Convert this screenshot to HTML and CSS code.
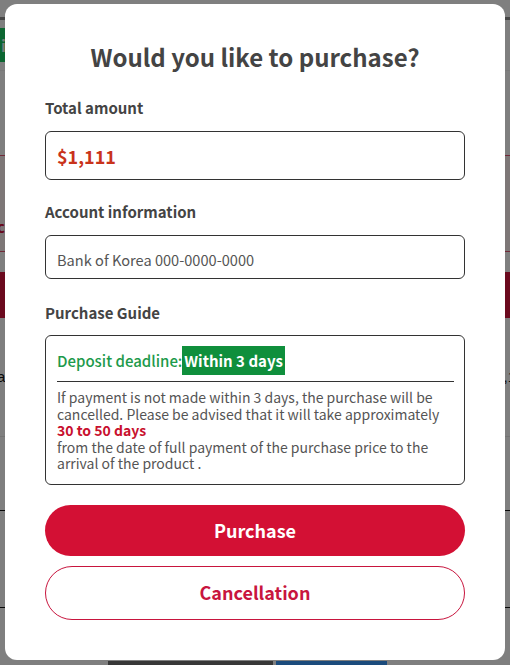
FILE: index.html
```html
<!DOCTYPE html>
<html lang="en">
<head>
  <meta charset="UTF-8" />
  <meta name="viewport" content="width=device-width, initial-scale=1.0"/>
  <title>Purchase</title>
  <link rel="stylesheet" href="styles.css">
</head>
<body>

  <!-- page behind the dialog -->
  <div class="page">
    <div class="topbar"></div>
    <div class="tabs">
      <span class="tab-active">i</span>
    </div>
    <div class="summary">
      <p class="summary-text">c</p>
    </div>
    <div class="bid-bar">Place a bid</div>
    <div class="info-row">
      <span>a</span>
      <span>,1</span>
    </div>
    <div class="rule light"></div>
    <div class="rule dark"></div>
    <div class="rule dark"></div>
    <div class="page-actions">
      <span class="btn-gray"></span>
      <span class="btn-blue"></span>
    </div>
  </div>

  <div class="overlay">
    <div class="modal">
      <h1>Would you like to purchase?</h1>

      <form class="details" onsubmit="return false">
        <label for="total">Total amount</label>
        <input type="text" id="total" class="amount" value="$1,111" readonly>

        <label for="account">Account information</label>
        <input type="text" id="account" class="account" value="Bank of Korea 000-0000-0000" readonly>

        <label>Purchase Guide</label>
        <div class="guide">
          <div class="deadline">
            <span class="deadline-label">Deposit deadline:</span><span class="deadline-value">Within 3 days</span>
          </div>
          <p class="guide-text">
            If payment is not made within 3 days, the purchase will be cancelled. Please be advised that it will take approximately
            <strong>30 to 50 days</strong>
            from the date of full payment of the purchase price to the arrival of the product .
          </p>
        </div>

        <button type="submit" class="btn-purchase">Purchase</button>
        <button type="button" class="btn-cancel">Cancellation</button>
      </form>
    </div>
  </div>

</body>
</html>
```

FILE: styles.css
```css
body {
  margin: 0;
  font-family: "Noto Sans CJK KR", "Noto Sans", sans-serif;
  background: #fff;
  height: 665px;
  overflow: hidden;
}
.page {
  width: 510px;
}
.topbar {
  height: 17px;
  border-bottom: 3px solid #8e8e8e;
}
.tabs {
  padding-top: 8px;
  height: 42px;
  border-bottom: 1px solid #f2f2f2;
}
.tab-active {
  display: inline-block;
  width: 120px;
  height: 34px;
  line-height: 34px;
  background: #19cc62;
  color: #e8f8ee;
  font-weight: bold;
  padding-left: 1px;
  box-sizing: border-box;
}
.summary {
  margin-top: 84px;
  height: 95px;
  border-top: 1px solid #e25470;
  border-bottom: 1px solid #e25470;
  background: #fbeeee;
}
.summary-text {
  margin: 0 0 0 -3px;
  padding-top: 60px;
  color: #d0103a;
  font-weight: bold;
  font-size: 15px;
}
.bid-bar {
  margin-top: 20px;
  height: 46px;
  line-height: 46px;
  background: #d6143c;
  color: #fff;
  text-align: center;
  font-weight: bold;
}
.info-row {
  display: flex;
  justify-content: space-between;
  padding: 50px 0 0;
  height: 68px;
  font-family: "Liberation Sans", Arial, sans-serif;
  font-size: 15px;
  color: #111;
  margin-left: -3px;
  margin-right: -6px;
}
.rule {
  height: 1px;
}
.rule.light {
  background: #e6e6e6;
}
.rule.dark {
  background: #111;
}
.rule.light + .rule.dark {
  margin-top: 73px;
}
.rule.dark + .rule.dark {
  margin-top: 96px;
}
.page-actions {
  display: flex;
  gap: 3px;
  margin-top: 53px;
  padding-left: 108px;
}
.btn-gray {
  width: 165px;
  height: 30px;
  background: #6e6e6e;
}
.btn-blue {
  width: 111px;
  height: 30px;
  background: #3696f8;
}

.overlay {
  position: fixed;
  inset: 0;
  background: rgba(0, 0, 0, 0.5);
}
.modal {
  position: absolute;
  left: 5px;
  top: 4px;
  width: 500px;
  height: 656px;
  box-sizing: border-box;
  background: #fff;
  border-radius: 12px;
  padding: 37px 40px 0;
}
h1 {
  margin: 0 0 25px;
  font-size: 24px;
  line-height: 32px;
  text-align: center;
  color: #444;
  font-weight: bold;
}
.details label {
  display: block;
  font-size: 15px;
  line-height: 20px;
  font-weight: bold;
  color: #444;
  margin: 0 0 13px;
}
.details input {
  display: block;
  width: 100%;
  box-sizing: border-box;
  border: 1px solid #333;
  border-radius: 6px;
  padding: 0 11px;
  font-family: inherit;
  outline: none;
  background: #fff;
  margin-bottom: 22px;
}
.amount {
  height: 49px;
  font-size: 18px;
  font-weight: bold;
  color: #c9331b;
}
.details .account {
  height: 44px;
  padding-top: 5px;
  font-size: 14.6px;
  color: #555;
  margin-bottom: 24px;
}
.guide {
  border: 1px solid #333;
  border-radius: 6px;
  padding: 10px 10px 12px 11px;
  margin-bottom: 20px;
  margin-top: -1px;
}
.deadline {
  display: flex;
  align-items: center;
  height: 29px;
  padding-bottom: 6px;
  border-bottom: 1px solid #333;
}
.deadline-label {
  font-size: 15px;
  font-weight: 500;
  color: #1d9a4b;
}
.deadline-value {
  display: inline-block;
  height: 29px;
  line-height: 29px;
  padding: 0 2px;
  background: #0f8f3c;
  color: #fff;
  font-size: 15px;
  font-weight: bold;
}
.guide-text {
  margin: 7px 0 0;
  font-size: 14px;
  line-height: 16.5px;
  color: #555;
}
.guide-text strong {
  display: block;
  color: #c8102e;
}
button {
  display: block;
  width: 100%;
  height: 51px;
  border-radius: 26px;
  font-family: inherit;
  font-size: 18px;
  font-weight: bold;
  cursor: pointer;
}
.btn-purchase {
  background: #d31034;
  border: none;
  color: #fff;
  margin-bottom: 10px;
}
.btn-cancel {
  height: 54px;
  padding-bottom: 3px;
  background: #fff;
  border: 1px solid #c8153e;
  color: #c8153e;
  border-radius: 27px;
}
```
